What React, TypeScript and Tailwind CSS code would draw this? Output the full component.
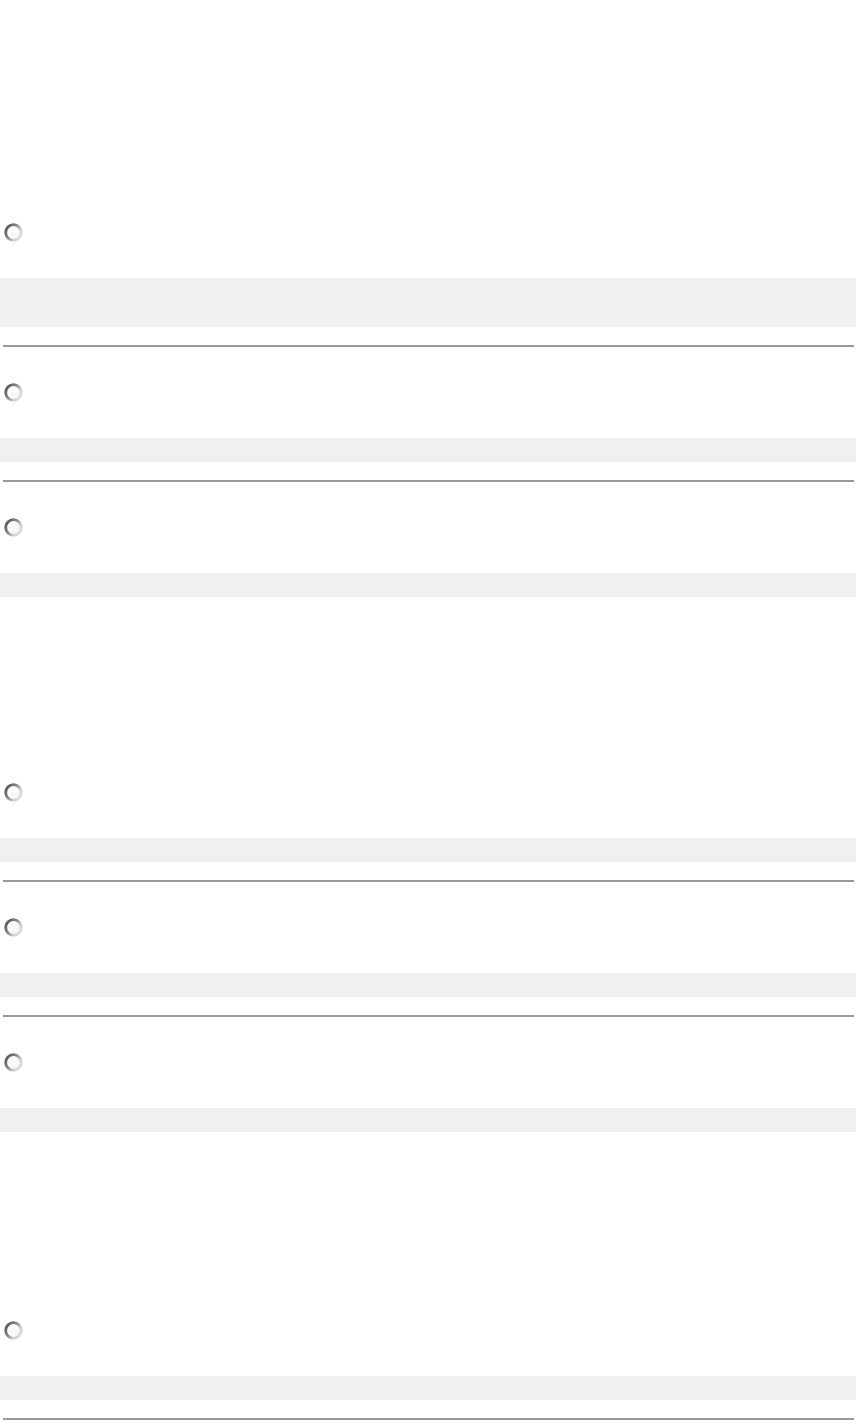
import React from 'react';

type Item = { barH: 'tall' | 'short'; line: boolean };

const groups: { gapClass: string; items: Item[] }[] = [
    {
        gapClass: '',
        items: [
            { barH: 'tall', line: true },
            { barH: 'short', line: true },
            { barH: 'short', line: false },
        ],
    },
    {
        gapClass: 'mt-[186px]',
        items: [
            { barH: 'short', line: true },
            { barH: 'short', line: true },
            { barH: 'short', line: false },
        ],
    },
    { gapClass: 'mt-[189px]', items: [{ barH: 'short', line: true }] },
];

function RadioMark() {
    return (
        <svg width="19" height="19" viewBox="0 0 19 19" className="block">
            <defs>
                <linearGradient id="ring" x1="0" y1="0.2" x2="1" y2="0.9">
                    <stop offset="0" stopColor="#555555" />
                    <stop offset="0.4" stopColor="#8a8a8a" />
                    <stop offset="0.7" stopColor="#cfcfcf" />
                    <stop offset="1" stopColor="#e2e2e2" />
                </linearGradient>
                <linearGradient id="fill" x1="0" y1="0" x2="1" y2="1">
                    <stop offset="0" stopColor="#ffffff" />
                    <stop offset="1" stopColor="#f3f3f3" />
                </linearGradient>
            </defs>
            <circle cx="9.5" cy="9.5" r="7.8" fill="url(#fill)" stroke="url(#ring)" strokeWidth="2.8" />
        </svg>
    );
}

function Option({ item }: { item: Item }) {
    return (
        <div className={item.line ? 'flex flex-col pb-[36px]' : 'flex flex-col'}>
            <div className="ml-[4px] h-[18px] w-[19px]">
                <RadioMark />
            </div>
            <div className={`mt-[37px] w-full bg-[#f0f0f0] ${item.barH === 'tall' ? 'h-[49px]' : 'h-[24px]'}`} />
            {item.line && <div className="mt-[18px] ml-[3px] mr-[2px] h-[2px] bg-[#999999]" />}
        </div>
    );
}

export default function App() {
    return (
        <div className="min-h-[1424px] w-full bg-white pt-[223px] font-['Liberation_Sans',sans-serif]">
            {groups.map((group, gi) => (
                <div key={gi} className={`flex flex-col ${group.gapClass}`}>
                    {group.items.map((item, ii) => (
                        <Option key={ii} item={item} />
                    ))}
                </div>
            ))}
        </div>
    );
}
